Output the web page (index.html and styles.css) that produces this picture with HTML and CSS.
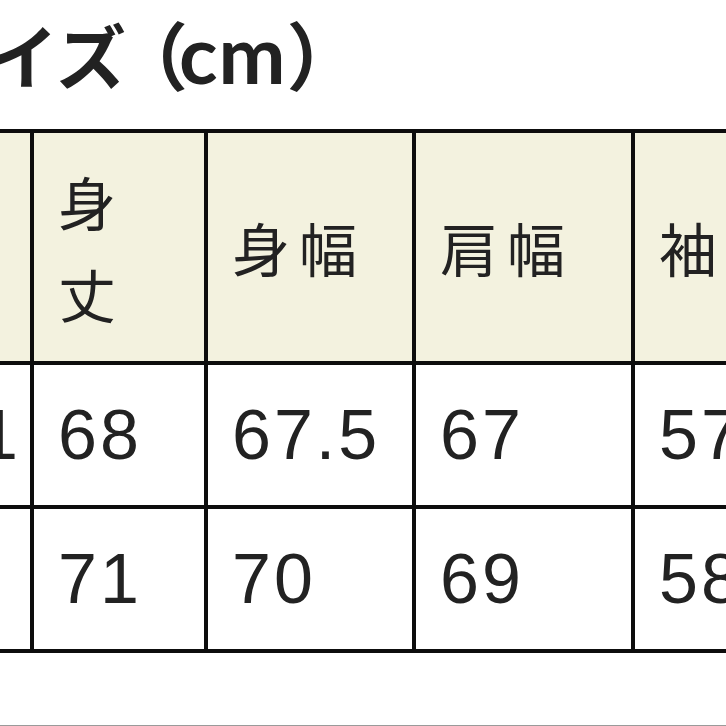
FILE: index.html
```html
<!DOCTYPE html>
<html lang="ja">
<head>
<meta charset="utf-8">
<link rel="stylesheet" href="styles.css">
</head>
<body>
<div class="page">
  <h1 class="title">サイズ<span class="paren open">（</span><span class="unit">cm</span><span class="paren close">）</span></h1>
  <table class="size-table">
    <colgroup>
      <col class="c0"><col class="c1"><col class="c2"><col class="c3"><col class="c4">
    </colgroup>
    <thead>
      <tr>
        <th class="first"></th>
        <th>身<br>丈</th>
        <th>身幅</th>
        <th>肩幅</th>
        <th>袖丈</th>
      </tr>
    </thead>
    <tbody>
      <tr>
        <td class="first">1</td>
        <td>68</td>
        <td>67.5</td>
        <td>67</td>
        <td>57</td>
      </tr>
      <tr>
        <td class="first"></td>
        <td>71</td>
        <td>70</td>
        <td>69</td>
        <td>58</td>
      </tr>
    </tbody>
  </table>
</div>
</body>
</html>
```

FILE: styles.css
```css
html, body {
  margin: 0;
  padding: 0;
  overflow: hidden;
  background: #fff;
}
.page {
  height: 725px;
  border-bottom: 1px solid #9a9a9a;
  overflow: hidden;
  color: #222;
}
.title {
  margin: 0 0 0 -82px;
  padding-top: 7px;
  height: 122px;
  font-family: "Noto Sans CJK JP", sans-serif;
  font-weight: 700;
  font-size: 70px;
  line-height: 90px;
  white-space: nowrap;
  color: #222;
}
.title .paren {
  font-size: 74px;
}
.title .open {
  margin-left: -12px;
  margin-right: -9px;
}
.title .close {
  margin-left: 0;
}
.title .unit {
  font-family: Lato, "Liberation Sans", sans-serif;
  font-weight: 700;
  font-size: 80px;
  letter-spacing: 1px;
}
.size-table {
  margin-left: -120px;
  border-collapse: collapse;
  table-layout: fixed;
  width: 951px;
}
.c0 { width: 150px; }
.c1 { width: 174px; }
.c2 { width: 208px; }
.c3 { width: 219px; }
.c4 { width: 200px; }
.size-table th,
.size-table td {
  border: 4px solid #0d0d0d;
  text-align: left;
  vertical-align: middle;
  padding: 0 0 0 24px;
}
.size-table th {
  background: #f3f2df;
  font-family: "Noto Sans CJK JP", sans-serif;
  font-weight: 400;
  font-size: 58px;
  letter-spacing: 9px;
  line-height: 92px;
  padding-top: 22px;
  padding-bottom: 22px;
  white-space: nowrap;
  color: #222;
}
.size-table td {
  height: 140px;
  font-family: "Liberation Sans", Arial, sans-serif;
  font-size: 70px;
  letter-spacing: 3px;
  line-height: 80px;
}
.size-table .first {
  text-align: right;
  padding: 0 12px 0 0;
  letter-spacing: 0;
}
```
